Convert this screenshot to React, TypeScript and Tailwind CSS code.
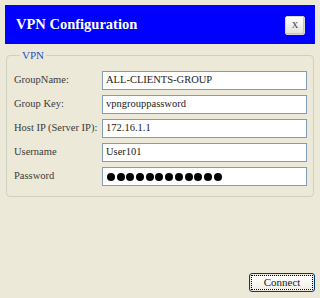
import React from "react";

const rows: { label: string; value: string; password?: boolean }[] = [
  { label: "GroupName:", value: "ALL-CLIENTS-GROUP" },
  { label: "Group Key:", value: "vpngrouppassword" },
  { label: "Host IP (Server IP):", value: "172.16.1.1" },
  { label: "Username", value: "User101" },
  { label: "Password", value: "", password: true },
];

export default function App() {
  return (
    <div className="w-[320px] h-[298px] bg-[#ECE9D8] pt-[5px] px-[5px] flex flex-col font-['Liberation_Serif','Times_New_Roman',serif]">
      <div className="h-[39px] bg-[#0000FF] flex items-center justify-between pl-[11px] pr-[10px]">
        <span className="text-white font-bold text-[14.5px] leading-none">VPN Configuration</span>
        <div className="w-[20px] h-[19px] mt-[2px] rounded-[2px] border border-[#d8d8d0] bg-gradient-to-b from-white to-[#e4e2da] flex items-center justify-center text-[9px] text-[#333] shadow-[inset_-1px_-1px_0_#c8c6bc]">
          X
        </div>
      </div>

      <fieldset className="mt-[5px] mx-[1px] h-[148px] border border-[#D0D0BF] rounded-[4px] pl-[7px] pr-[6px] pt-[10px] pb-0">
        <legend className="ml-[6px] px-[2px] text-[11px] leading-[12px] text-[#1E4BC8]">VPN</legend>
        <div className="grid grid-cols-[88px_205px] gap-y-[5px] items-center">
          {rows.map((r) => (
            <React.Fragment key={r.label}>
              <span className="text-[10.5px] text-[#3a3a3a] leading-none">{r.label}</span>
              <div className="h-[19px] border border-[#7F9DB9] bg-white flex items-center px-[3px] overflow-hidden">
                {r.password ? (
                  <div className="flex items-center gap-[1.7px] pl-[1px]" aria-label="password">
                    {Array.from({ length: 12 }).map((_, i) => (
                      <span key={i} className="block w-[8px] h-[8px] rounded-full bg-black" />
                    ))}
                  </div>
                ) : (
                  <span className="text-[10.5px] leading-none text-[#1a1a1a]">{r.value}</span>
                )}
              </div>
            </React.Fragment>
          ))}
        </div>
      </fieldset>

      <div className="flex-1" />
      <div className="flex justify-end mb-[6px]">
        <div className="w-[66px] h-[19px] rounded-[3px] border border-[#003C74] p-[1px]">
          <div className="w-full h-full border border-dotted border-black bg-gradient-to-b from-white to-[#f0efe6] flex items-center justify-center text-[11px] text-[#222] leading-none">
            Connect
          </div>
        </div>
      </div>
    </div>
  );
}
